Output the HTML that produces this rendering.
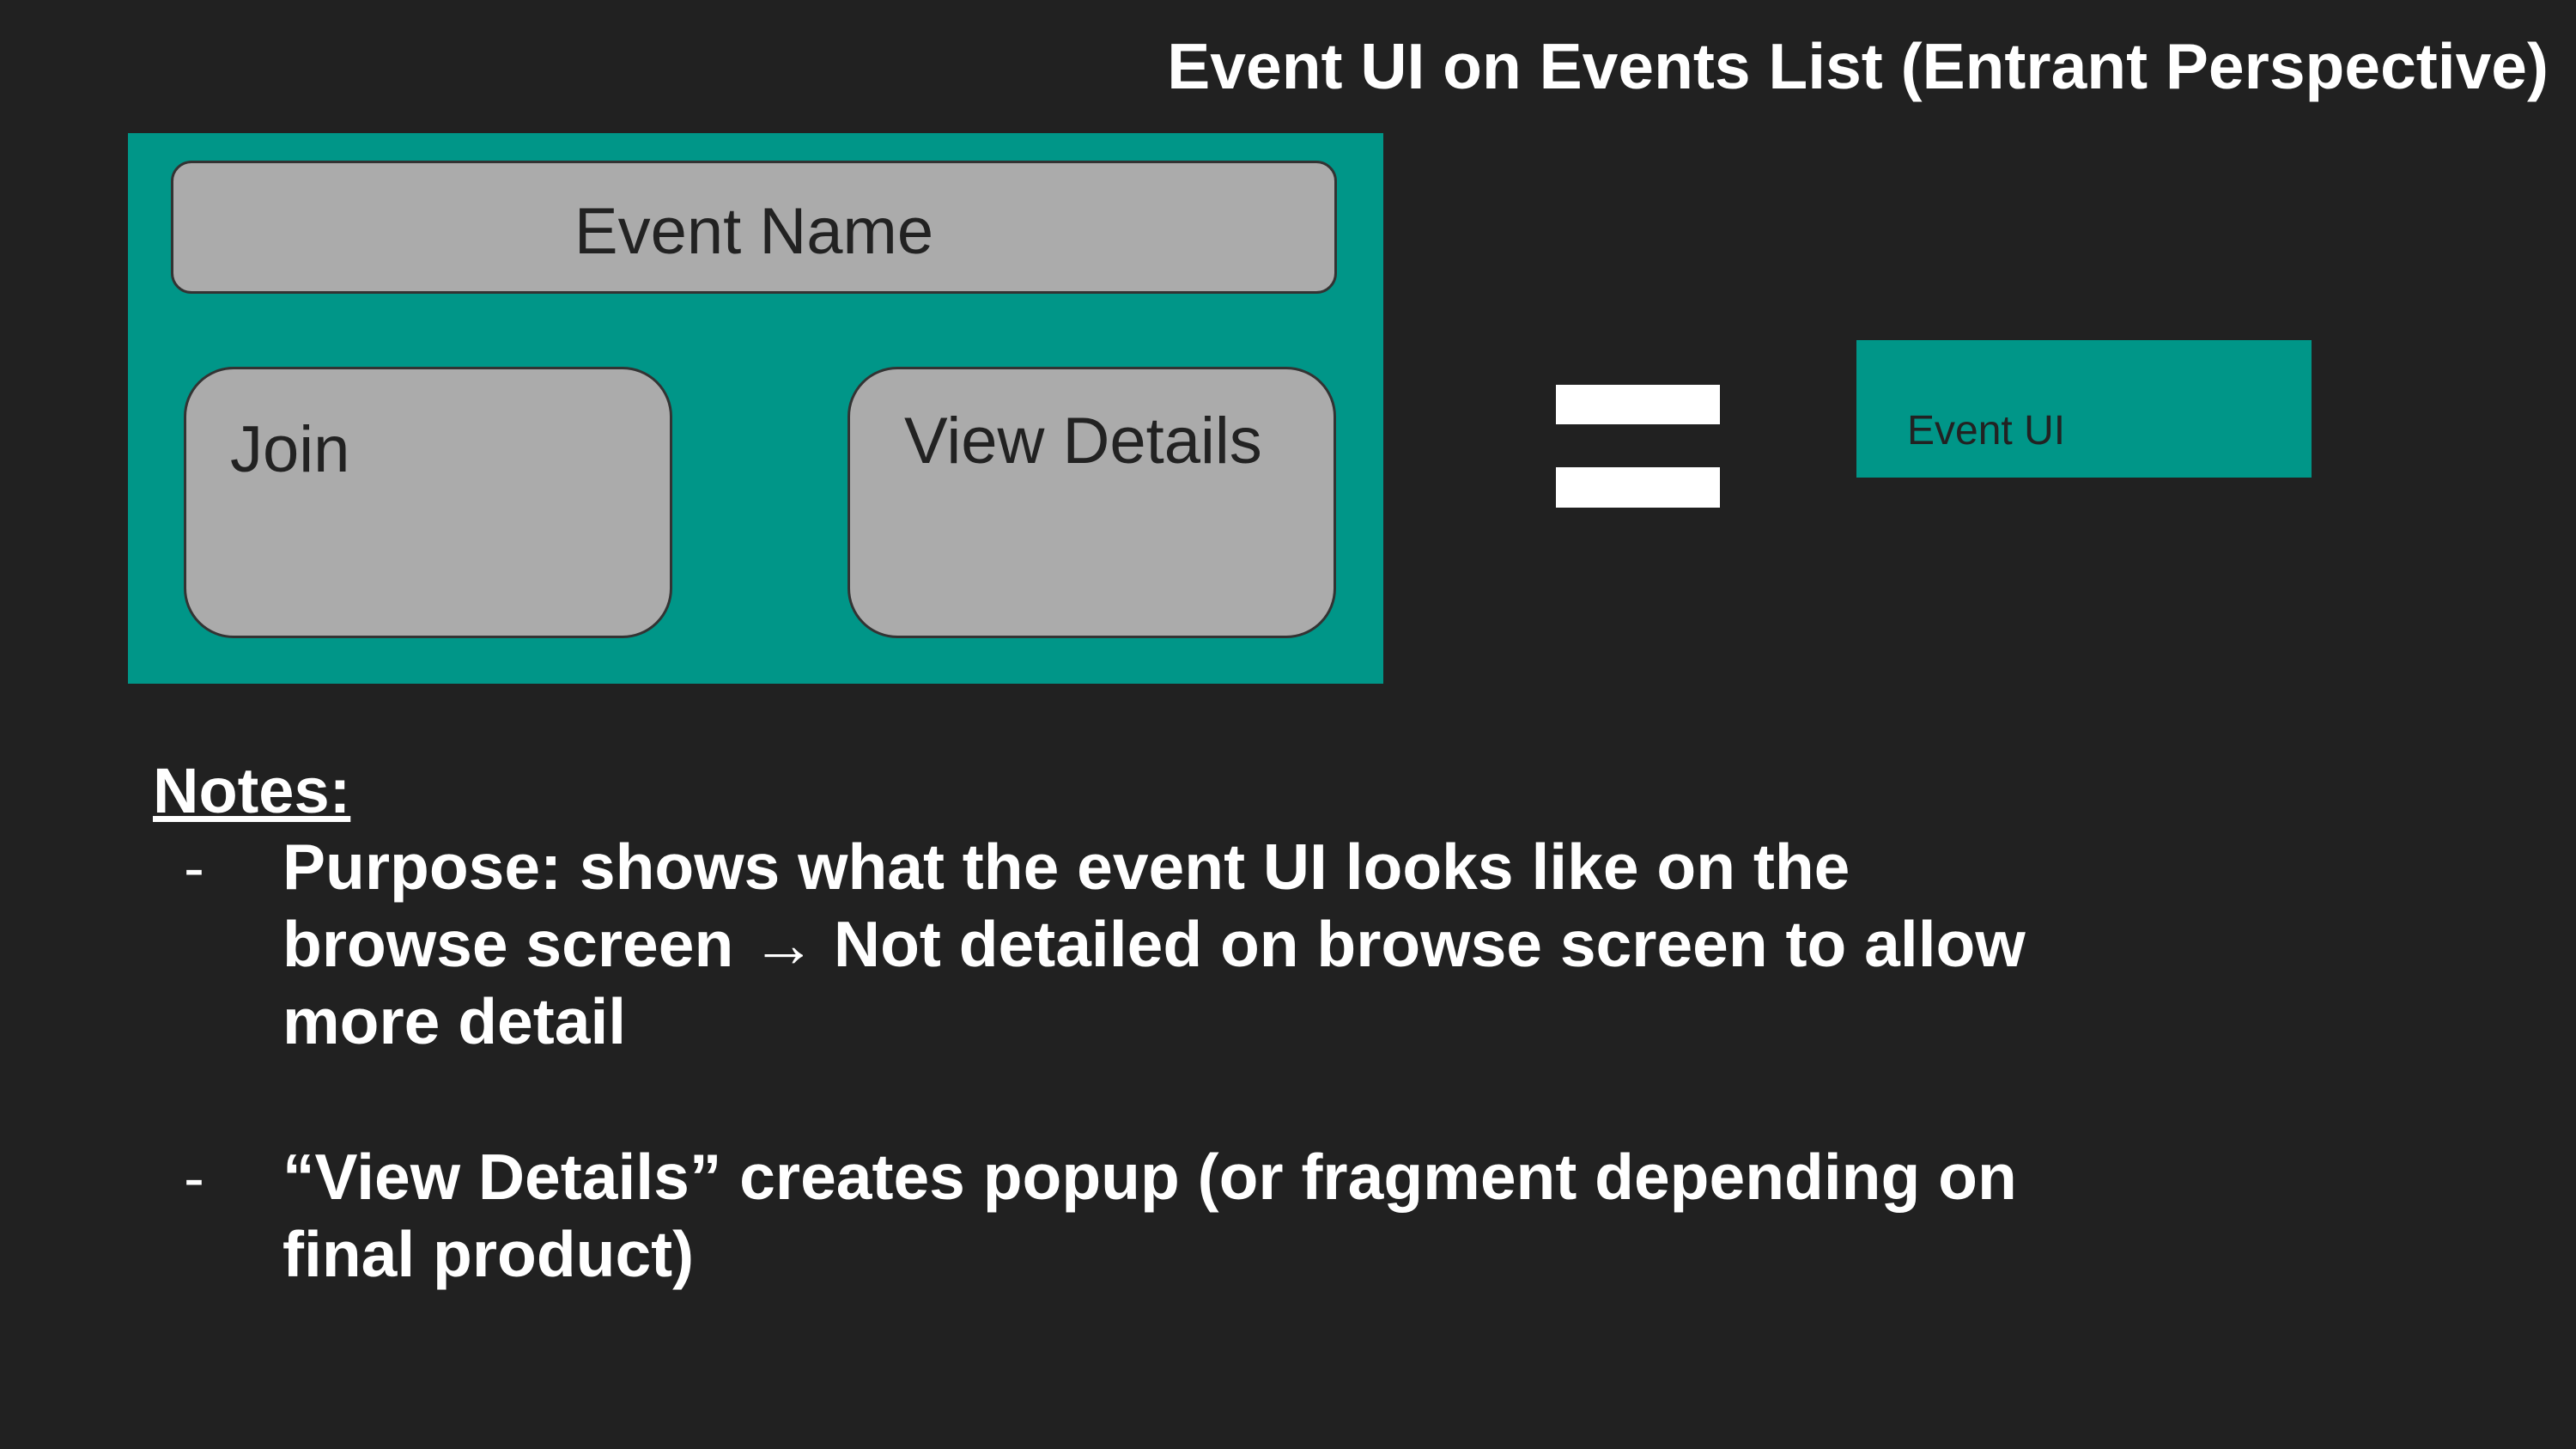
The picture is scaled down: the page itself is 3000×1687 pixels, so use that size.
<!DOCTYPE html>
<html><head><meta charset="utf-8"><style>
body{margin:0;width:3000px;height:1687px;background:#212121;position:relative;overflow:hidden;font-family:"Liberation Sans",Arial,sans-serif}
.a{position:absolute}
.g{background:#ababab;border:3px solid #333;box-sizing:border-box;color:#222}
.w{color:#fff;font-weight:bold}
</style></head><body>
<div class="a w" style="right:32px;top:34px;font-size:75px;white-space:nowrap">Event UI on Events List (Entrant Perspective)</div>
<div class="a" style="left:149px;top:155px;width:1462px;height:641px;background:#009688"></div>
<div class="a g" style="left:199px;top:187px;width:1358px;height:155px;border-radius:24px;font-size:76px;text-align:center;line-height:160px">Event Name</div>
<div class="a g" style="left:214px;top:427px;width:569px;height:316px;border-radius:58px;font-size:76px"><div class="a" style="left:51px;top:50px">Join</div></div>
<div class="a g" style="left:987px;top:427px;width:569px;height:316px;border-radius:58px;font-size:76px"><div class="a" style="left:63px;top:40px;white-space:nowrap">View Details</div></div>
<div class="a" style="left:1812px;top:448px;width:191px;height:46px;background:#fff"></div>
<div class="a" style="left:1812px;top:544px;width:191px;height:47px;background:#fff"></div>
<div class="a" style="left:2162px;top:396px;width:530px;height:160px;background:#009688"></div>
<div class="a" style="left:2221px;top:474px;font-size:48px;color:#222">Event UI</div>
<div class="a w" style="left:178px;top:878px;font-size:74px;text-decoration:underline">Notes:</div>
<div class="a" style="left:214px;top:970px;font-size:72px;color:#fff">-</div>
<div class="a w" style="left:329px;top:964px;font-size:75px;line-height:90px;width:2200px">Purpose: shows what the event UI looks like on the<br>browse screen → Not detailed on browse screen to allow<br>more detail</div>
<div class="a" style="left:214px;top:1331px;font-size:72px;color:#fff">-</div>
<div class="a w" style="left:329px;top:1325px;font-size:75px;line-height:90px;width:2200px">“View Details” creates popup (or fragment depending on<br>final product)</div>
</body></html>
